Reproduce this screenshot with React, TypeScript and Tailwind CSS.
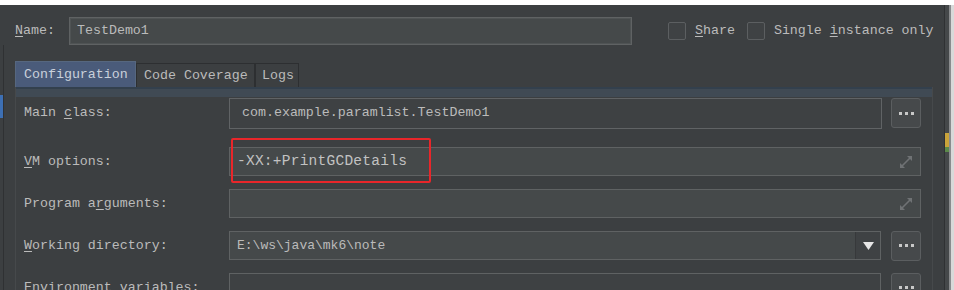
import React from "react";

const mono = { fontFamily: '"Liberation Mono", "DejaVu Sans Mono", monospace' };

function U({ children }: { children: React.ReactNode }) {
  return <span className="underline underline-offset-[2px] decoration-[#bbbbbb]">{children}</span>;
}

function Dots() {
  return (
    <div className="w-[30px] h-[30px] shrink-0 rounded-[3px] border border-[#5b5e60] bg-[#46494b] flex items-center justify-center gap-[3px]">
      <span className="w-[3px] h-[3px] bg-[#c8c8c8]" />
      <span className="w-[3px] h-[3px] bg-[#c8c8c8]" />
      <span className="w-[3px] h-[3px] bg-[#c8c8c8]" />
    </div>
  );
}

function Expand() {
  return (
    <svg width="16" height="16" viewBox="0 0 16 16" className="shrink-0">
      <g stroke="#6f7274" strokeWidth="1.6" fill="none">
        <path d="M2.5 13.5 L13.5 2.5" />
      </g>
      <path d="M9 2 L14 2 L14 7 Z" fill="#6f7274" />
      <path d="M2 9 L2 14 L7 14 Z" fill="#6f7274" />
    </svg>
  );
}

function Row({
  label,
  children,
  h = 29,
  mt = 0,
}: {
  label: React.ReactNode;
  children: React.ReactNode;
  h?: number;
  mt?: number;
}) {
  return (
    <div className="flex items-center" style={{ height: h, marginTop: mt }}>
      <div className="w-[213px] shrink-0 pl-[8px] text-[13.3px] text-[#bbbbbb] whitespace-nowrap">{label}</div>
      {children}
    </div>
  );
}

export default function App() {
  return (
    <div className="w-[954px] h-[290px] overflow-hidden bg-[#3c3f41] relative text-[#bbbbbb]" style={mono}>
      {/* top white strip */}
      <div className="h-[5px] bg-white" />
      <div className="flex h-[285px]">
        {/* left gutter */}
        <div className="w-[10px] shrink-0 relative flex">
          <div className="w-[3px] pt-[90px]">
            <div className="h-[23px] bg-[#3d6fb3]" />
          </div>
          <div className="w-[1px] mt-[40px] bg-[#2f3133]" />
          <div className="flex-1" />
        </div>

        {/* main */}
        <div className="flex-1 pl-[5px] pr-[1px]">
          {/* name row */}
          <div className="flex items-center h-[28px] mt-[12px] text-[13.3px]">
            <div className="w-[54px]">
              <U>N</U>ame:
            </div>
            <div className="w-[563px] h-[28px] border border-[#5f6263] bg-[#45494a] flex items-center pl-[7px] shadow-[inset_0_0_0_1px_#4f5354]">
              TestDemo1
            </div>
            <div className="ml-[36px] w-[18px] h-[18px] border border-[#5c5f61] bg-[#3f4244] rounded-[2px]" />
            <div className="ml-[9px]">
              <U>S</U>hare
            </div>
            <div className="ml-[12px] w-[18px] h-[18px] border border-[#5c5f61] bg-[#3f4244] rounded-[2px]" />
            <div className="ml-[9px] whitespace-nowrap">
              Single <U>i</U>nstance only
            </div>
          </div>

          {/* tabs */}
          <div className="mt-[16px] w-[918px]">
            <div className="flex items-end h-[26px] text-[13.3px]">
              <div className="w-[121px] h-[26px] bg-[#4a5b7a] border-t border-l border-r border-[#56677f] pl-[8px] flex items-center text-[#c9d0da]">
                Configuration
              </div>
              <div className="w-[119px] h-[24px] border border-b-0 border-[#2d2f31] pl-[7px] flex items-center">
                Code Coverage
              </div>
              <div className="w-[44px] h-[24px] border border-b-0 border-[#2d2f31] pl-[6px] flex items-center">
                Logs
              </div>
            </div>
            {/* panel */}
            <div className="border-l border-r border-[#46494b] h-[240px]">
              <div className="h-[2px] bg-[#33404d]" />
              <div className="h-[8px] bg-[#404a54]" />
              <div className="pr-[11px]">
                <Row label={<>Main <U>c</U>lass:</>} h={32}>
                  <div className="w-[653px] h-[31px] border border-[#606365] bg-[#3e4143] flex items-center pl-[12px] text-[13.3px]">
                    com.example.paramlist.TestDemo1
                  </div>
                  <div className="ml-[9px]">
                    <Dots />
                  </div>
                </Row>
                <Row label={<><U>V</U>M options:</>} mt={18}>
                  <div className="w-[692px] h-[29px] border border-[#5f6263] bg-[#45494a] flex items-center pl-[7px] pr-[6px]">
                    <span className="text-[14.5px] tracking-[0.25px] text-[#c2c2c2]" style={{ fontFamily: '"Courier New", "Liberation Mono", monospace' }}>
                      -XX:+PrintGCDetails
                    </span>
                    <div className="flex-1" />
                    <Expand />
                  </div>
                </Row>
                <Row label={<>Program a<U>r</U>guments:</>} mt={13}>
                  <div className="w-[692px] h-[29px] border border-[#5f6263] bg-[#45494a] flex items-center pr-[6px]">
                    <div className="flex-1" />
                    <Expand />
                  </div>
                </Row>
                <Row label={<><U>W</U>orking directory:</>} mt={13}>
                  <div className="w-[652px] h-[29px] border border-[#5f6263] bg-[#45494a] flex items-center">
                    <span className="pl-[7px] text-[13px] flex-1">E:\ws\java\mk6\note</span>
                    <div className="w-[25px] h-full border-l border-[#37393b] bg-[#3f4244] flex items-center justify-center">
                      <svg width="11" height="8" viewBox="0 0 11 8">
                        <path d="M0 0 L11 0 L5.5 8 Z" fill="#e6e6e6" />
                      </svg>
                    </div>
                  </div>
                  <div className="ml-[10px]">
                    <Dots />
                  </div>
                </Row>
                <Row label={<>Environment variables:</>} mt={13}>
                  <div className="w-[652px] h-[29px] border border-[#5f6263] bg-[#3e4143]" />
                  <div className="ml-[10px]">
                    <Dots />
                  </div>
                </Row>
              </div>
            </div>
          </div>
        </div>

        {/* right scroll strip */}
        <div className="w-[10px] shrink-0 flex">
          <div className="w-[1px] bg-[#2f3133]" />
          <div className="w-[4px] bg-[#45484a] relative">
            <div className="absolute top-[128px] left-0 w-[4px] h-[14px] bg-[#c9a33a]" />
            <div className="absolute top-[142px] left-0 w-[4px] h-[5px] bg-[#5b8a4a]" />
          </div>
          <div className="w-[2px] bg-[#8a8c8e]" />
          <div className="flex-1 bg-[#d9d9d9]" />
        </div>
      </div>

      {/* red highlight */}
      <div className="absolute left-[231px] top-[138px] w-[200px] h-[45px] border-2 border-[#e8262a] rounded-[2px]" />
    </div>
  );
}
